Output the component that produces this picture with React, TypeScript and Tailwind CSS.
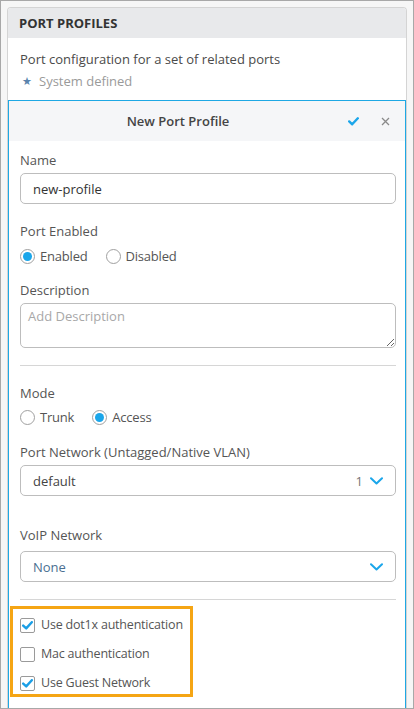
import React from 'react'

function Radio({ checked, label }: { checked?: boolean; label: string }) {
  return (
    <label className="flex items-center gap-[5px]">
      <span className="w-[15px] h-[15px] rounded-full border border-[#a0a0a0] bg-white flex items-center justify-center">
        {checked && <span className="w-[9px] h-[9px] rounded-full bg-[#1ba6ea]" />}
      </span>
      <span className="tracking-[-0.2px]">{label}</span>
    </label>
  )
}

function Checkbox({ checked, label }: { checked?: boolean; label: string }) {
  return (
    <div className="flex shrink-0 items-center gap-[6px] h-[28px] whitespace-nowrap">
      <span className="w-[15px] h-[15px] shrink-0 rounded-[2px] border border-[#9a9a9a] bg-white flex items-center justify-center">
        {checked && (
          <svg width="11" height="9" viewBox="0 0 11 9">
            <path d="M1.2 4.6 L4.2 7.4 L9.8 1.2" fill="none" stroke="#1b9fe6" strokeWidth="2.4" strokeLinecap="round" strokeLinejoin="round" />
          </svg>
        )}
      </span>
      <span className="text-[12.5px] tracking-[-0.2px]">{label}</span>
    </div>
  )
}

function Chevron() {
  return (
    <svg width="13" height="8" viewBox="0 0 13 8">
      <path d="M1 1.2 L6.5 6.5 L12 1.2" fill="none" stroke="#1ba6ea" strokeWidth="2" strokeLinecap="round" strokeLinejoin="round" />
    </svg>
  )
}

export default function App() {
  return (
    <div className="w-[414px] h-[709px] overflow-hidden border border-[#a8a8a8] bg-[#f6f6f6] pt-[6px] px-[6px] font-['Open_Sans',sans-serif] text-[13px] leading-[18px] text-[#555]">
      <div className="h-full bg-white border border-[#d4d4d4] border-b-0 rounded-t-[4px] flex flex-col">
        {/* card header */}
        <div className="h-[30px] shrink-0 bg-[#e8e9eb] rounded-t-[3px] flex items-center pl-[11px] font-bold text-[#333]">
          PORT PROFILES
        </div>
        <div className="pt-[12px] pl-[12px]">
          <div className="text-[#4a4a4a]">Port configuration for a set of related ports</div>
          <div className="mt-[4px] flex items-center gap-[7px] text-[#9a9a9a]">
            <span className="text-[11px] text-[#5a84ad] pl-[2px]">★</span>
            <span>System defined</span>
          </div>
        </div>

        {/* new profile panel */}
        <div className="mt-[10px] flex-1 border border-[#1ea8e4] border-b-0 flex flex-col">
          <div className="h-[40px] shrink-0 bg-[#f5f6f8] flex items-center">
            <div className="flex-1 text-center font-semibold text-[#444]">New Port Profile</div>
            <div className="w-[58px] flex items-center pl-[1px] pr-[15px]">
              <svg width="11" height="9" viewBox="0 0 11 9">
                <path d="M1.2 4.4 L4.2 7.3 L9.8 1.3" fill="none" stroke="#1ba6ea" strokeWidth="2.4" strokeLinecap="round" strokeLinejoin="round" />
              </svg>
              <svg className="ml-auto" width="9" height="9" viewBox="0 0 9 9">
                <path d="M1 1 L8 8 M8 1 L1 8" fill="none" stroke="#8a8a8a" strokeWidth="1.3" />
              </svg>
            </div>
          </div>

          <div className="pt-[10px] pl-[11px] pr-[9px] bg-white">
            <div>Name</div>
            <div className="mt-[4px] h-[31px] border border-[#bdbdbd] rounded-[5px] flex items-center pl-[12px] text-[#333]">
              new-profile
            </div>

            <div className="mt-[18px]">Port Enabled</div>
            <div className="mt-[7px] flex items-center gap-[18px]">
              <Radio checked label="Enabled" />
              <Radio label="Disabled" />
            </div>

            <div className="mt-[16px]">Description</div>
            <textarea
              className="mt-[4px] block w-full h-[45px] border border-[#bdbdbd] rounded-[5px] pl-[7px] pt-[3px] outline-none resize-y placeholder:text-[#a8a8a8] text-[#333]"
              placeholder="Add Description"
            />

            <div className="mt-[17px] h-px bg-[#d6d6d6]" />

            <div className="mt-[18px]">Mode</div>
            <div className="mt-[6px] flex items-center gap-[18px]">
              <Radio label="Trunk" />
              <Radio checked label="Access" />
            </div>

            <div className="mt-[17px]">Port Network (Untagged/Native VLAN)</div>
            <div className="mt-[4px] h-[31px] border border-[#bdbdbd] rounded-[5px] flex items-center pl-[12px] pr-[12px] text-[#444]">
              <span>default</span>
              <span className="ml-auto mr-[7px] text-[#777]">1</span>
              <Chevron />
            </div>

            <div className="mt-[30px]">VoIP Network</div>
            <div className="mt-[7px] h-[31px] border border-[#bdbdbd] rounded-[5px] flex items-center pl-[12px] pr-[12px] text-[#4a6f91]">
              <span>None</span>
              <span className="ml-auto" />
              <Chevron />
            </div>

            <div className="mt-[17px] h-px bg-[#d6d6d6]" />

            <div className="mt-[6px] -ml-[10px] w-[183px] h-[91px] border-[3px] border-[#f5a514] pl-[7px] pt-[2px] flex flex-col gap-[1px]">
              <Checkbox checked label="Use dot1x authentication" />
              <Checkbox label="Mac authentication" />
              <Checkbox checked label="Use Guest Network" />
            </div>
          </div>
        </div>
      </div>
    </div>
  )
}
